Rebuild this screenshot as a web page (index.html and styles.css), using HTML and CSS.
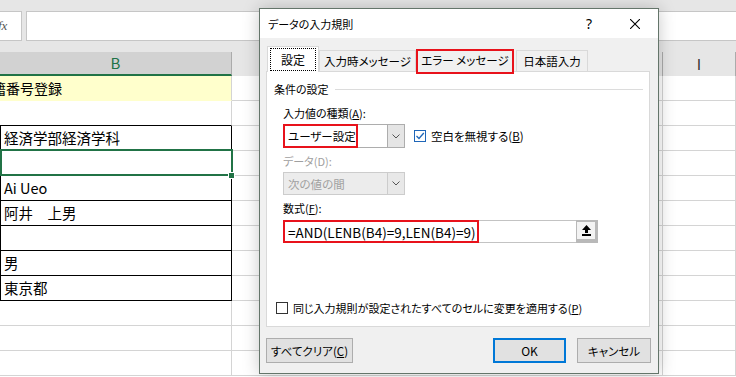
FILE: index.html
```html
<!DOCTYPE html>
<html lang="ja">
  <head>
    <meta charset="UTF-8" />
    <meta name="viewport" content="width=device-width, initial-scale=1.0" />
    <title>データの入力規則</title>
    <link rel="stylesheet" href="styles.css">
  </head>
  <body>
    <div class="topbar">
      <div class="fx">fx</div>
      <div class="formula"></div>
    </div>

    <div class="headers">
      <div class="hd sel">B</div>
      <div class="hd"></div>
      <div class="hd">I</div>
    </div>

    <div class="row"><div class="cell title">籍番号登録</div><div class="cell"></div><div class="cell"></div></div>
    <div class="row"><div class="cell top"></div><div class="cell"></div><div class="cell"></div></div>
    <div class="row"><div class="cell bx">経済学部経済学科</div><div class="cell"></div><div class="cell"></div></div>
    <div class="row"><div class="cell bx active"></div><div class="cell"></div><div class="cell"></div></div>
    <div class="row"><div class="cell bx">Ai Ueo</div><div class="cell"></div><div class="cell"></div></div>
    <div class="row"><div class="cell bx">阿井　上男</div><div class="cell"></div><div class="cell"></div></div>
    <div class="row"><div class="cell bx"></div><div class="cell"></div><div class="cell"></div></div>
    <div class="row"><div class="cell bx">男</div><div class="cell"></div><div class="cell"></div></div>
    <div class="row"><div class="cell bx">東京都</div><div class="cell"></div><div class="cell"></div></div>
    <div class="row"><div class="cell"></div><div class="cell"></div><div class="cell"></div></div>
    <div class="row"><div class="cell"></div><div class="cell"></div><div class="cell"></div></div>
    <div class="row"><div class="cell"></div><div class="cell"></div><div class="cell"></div></div>

    <div class="dialog">
      <div class="titlebar">
        <span class="dlg-title">データの入力規則</span>
        <span class="cap">?</span>
        <span class="cap">
          <svg width="10" height="10" viewBox="0 0 10 10"><path d="M0 0 10 10M10 0 0 10" stroke="#000" stroke-width="1.1" fill="none"/></svg>
        </span>
      </div>

      <div class="dlg-body">
        <div class="tabs">
          <div class="tab current"><span class="focus">設定</span></div>
          <div class="tab">入力時メッセージ</div>
          <div class="tab marked">エラー メッセージ</div>
          <div class="tab last">日本語入力</div>
        </div>

        <div class="panel">
          <div class="group"><span>条件の設定</span><i class="rule"></i></div>

          <div class="fields">
            <div class="lbl first">入力値の種類(<u>A</u>):</div>
            <div class="line">
              <div class="combo">
                <span class="val">ユーザー設定</span>
                <span class="hl short"></span>
                <span class="drop">
                  <svg width="8" height="5" viewBox="0 0 8 5"><path d="M0.5 0.5 4 4 7.5 0.5" stroke="#555" fill="none"/></svg>
                </span>
              </div>
              <div class="check">
                <span class="box on">
                  <svg width="10" height="10" viewBox="0 0 10 10"><path d="M1.5 5 4 7.5 8.8 2" stroke="#1f66b8" stroke-width="1.3" fill="none"/></svg>
                </span>
                空白を無視する(<u>B</u>)
              </div>
            </div>

            <div class="lbl off">データ(D):</div>
            <div class="combo disabled">
              <span class="val">次の値の間</span>
              <span class="drop">
                <svg width="8" height="5" viewBox="0 0 8 5"><path d="M0.5 0.5 4 4 7.5 0.5" stroke="#555" fill="none"/></svg>
              </span>
            </div>

            <div class="lbl">数式(<u>F</u>):</div>
            <div class="input">
              <span class="val formula-text">=AND(LENB(B4)=9,LEN(B4)=9)</span>
              <span class="hl long"></span>
              <span class="ref">
                <span>
                  <svg width="9" height="11" viewBox="0 0 9 11"><path d="M4.5 0 9 5H6v3H3V5H0z"/><rect x="0" y="9" width="9" height="2"/></svg>
                </span>
              </span>
            </div>
          </div>

          <div class="check apply">
            <span class="box"></span>
            同じ入力規則が設定されたすべてのセルに変更を適用する(<u>P</u>)
          </div>
        </div>

        <div class="buttons">
          <button class="btn clear">すべてクリア(<u>C</u>)</button>
          <button class="btn ok">OK</button>
          <button class="btn cancel">キャンセル</button>
        </div>
      </div>
    </div>
  </body>
</html>
```

FILE: styles.css
```css
body {
  margin: 0;
  width: 736px;
  height: 377px;
  overflow: hidden;
  position: relative;
  background-color: #fff;
  font-family: "Noto Sans CJK JP", sans-serif;
  color: #000;
}

/* formula bar */
.topbar {
  height: 52px;
  box-sizing: border-box;
  padding-top: 11px;
  display: flex;
  align-items: flex-start;
  gap: 4px;
  background-color: #e6e6e6;
}
.fx {
  width: 22px;
  height: 30px;
  box-sizing: border-box;
  background-color: #fff;
  border: 1px solid #c6c6c6;
  border-left: none;
  font: italic 13px "Liberation Serif", serif;
  color: #555;
  line-height: 28px;
  text-indent: -2px;
  overflow: hidden;
}
.formula {
  flex: 1;
  height: 30px;
  box-sizing: border-box;
  background-color: #fff;
  border: 1px solid #c6c6c6;
  border-right: none;
}

/* sheet */
.headers,
.row {
  display: grid;
  grid-template-columns: 232px 431px 1fr;
}
.headers {
  height: 24px;
  background-color: #e6e6e6;
}
.hd {
  box-sizing: border-box;
  border-right: 1px solid #ababab;
  text-align: center;
  font-size: 15px;
  line-height: 24px;
  color: #333;
}
.hd.sel {
  background-color: #d2d2d2;
  border-bottom: 2px solid #217346;
  color: #217346;
  line-height: 22px;
}
.row {
  height: 25px;
}
.cell {
  position: relative;
  box-sizing: border-box;
  border-right: 1px solid #d4d4d4;
  border-bottom: 1px solid #d4d4d4;
  padding-left: 4px;
  font-size: 14.5px;
  line-height: 24px;
  white-space: nowrap;
  overflow: hidden;
}
.cell.title {
  background-color: #ffffcc;
  border-bottom-color: #ffffcc;
  text-indent: -12px;
  font-size: 14px;
}
.cell.top {
  border-bottom-color: #000;
}
.cell.bx {
  padding-left: 3px;
  border-left: 1px solid #000;
  border-right-color: #000;
  border-bottom-color: #000;
}
.cell.active {
  overflow: visible;
  z-index: 1;
}
.cell.active::before {
  content: "";
  position: absolute;
  top: -2px;
  left: -1px;
  right: -2px;
  bottom: -1px;
  border: 2px solid #217346;
}
.cell.active::after {
  content: "";
  position: absolute;
  right: -4px;
  bottom: -4px;
  width: 5px;
  height: 5px;
  background-color: #217346;
  border: 1px solid #fff;
}

/* dialog */
.dialog {
  position: absolute;
  left: 259px;
  top: 8px;
  width: 400px;
  height: 366px;
  box-sizing: border-box;
  border: 1px solid #64756a;
  background-color: #f0f0f0;
  box-shadow: 0 0 16px rgba(0, 0, 0, 0.22);
  font-size: 11px;
  font-feature-settings: "palt";
}
.titlebar {
  height: 29px;
  display: flex;
  align-items: center;
  background-color: #fff;
}
.dlg-title {
  flex: 1;
  padding-left: 8px;
}
.cap {
  width: 46px;
  height: 100%;
  display: flex;
  align-items: center;
  justify-content: center;
  font: 14px "Noto Sans", sans-serif;
}
.dlg-body {
  padding: 8px 7px 0 6px;
}

.tabs {
  height: 25px;
  display: flex;
  align-items: flex-end;
  font-size: 11.5px;
}
.tab {
  position: relative;
  height: 21px;
  box-sizing: border-box;
  border: 1px solid #d9d9d9;
  border-bottom: none;
  background-color: #f0f0f0;
  display: flex;
  align-items: center;
  justify-content: center;
  width: 97px;
}
.tab.current {
  width: 52px;
  height: 26px;
  margin-left: 1px;
  margin-bottom: -1px;
  background-color: #fff;
  z-index: 1;
  font-size: 12px;
}
.tab.current .focus {
  border: 1px dotted #000;
  padding: 2px 10px;
  line-height: 17px;
}
.tab.marked {
  width: 98px;
  height: 25px;
  margin-bottom: -3px;
  border: 2px solid #e8121b;
  z-index: 2;
  padding-bottom: 3px;
}
.tab.last {
  width: 72px;
  margin-left: 2px;
}

.panel {
  height: 256px;
  margin-right: 1px;
  box-sizing: border-box;
  border: 1px solid #d9d9d9;
  background-color: #fff;
  display: flex;
  flex-direction: column;
}
.group {
  margin-top: 9px;
  padding-left: 7px;
  display: flex;
  align-items: center;
  line-height: 16px;
}
.rule {
  flex: 1;
  height: 1px;
  margin: 0 6px;
  background-color: #dcdcdc;
}
.fields {
  padding-left: 16px;
}
.lbl {
  margin-top: 5px;
  line-height: 16px;
}
.lbl.first {
  margin-top: 8px;
}
.lbl.off {
  color: #a0a0a0;
}
.line {
  margin-top: 3px;
  display: flex;
  align-items: center;
}
.combo {
  position: relative;
  width: 122px;
  height: 24px;
  box-sizing: border-box;
  border: 1px solid #adadad;
  background-color: #fff;
  display: flex;
  align-items: center;
  font-size: 11.5px;
}
.combo .val,
.input .val {
  padding-left: 4px;
}
.drop {
  margin-left: auto;
  width: 17px;
  height: 100%;
  box-sizing: border-box;
  border-left: 1px solid #adadad;
  background-color: #e5e5e5;
  display: flex;
  align-items: center;
  justify-content: center;
}
.combo.disabled {
  margin-top: 3px;
  height: 23px;
  border-color: #cccccc;
  background-color: #ececec;
  color: #a0a0a0;
}
.combo.disabled .drop {
  border-left-color: #cccccc;
  background-color: #e8e8e8;
}
.hl {
  position: absolute;
  left: -1px;
  top: -1px;
  bottom: -1px;
  border: 2px solid #e8121b;
}
.hl.short {
  width: 71px;
}
.hl.long {
  width: 192px;
}

.check {
  display: flex;
  align-items: center;
  line-height: 16px;
}
.line .check {
  margin-left: 9px;
  font-size: 11.5px;
}
.box {
  width: 12px;
  height: 12px;
  box-sizing: border-box;
  margin-right: 5px;
  border: 1px solid #333;
  background-color: #fff;
  display: flex;
  align-items: center;
  justify-content: center;
}
.box.on {
  border-color: #1f66b8;
}

.input {
  position: relative;
  margin-top: 4px;
  width: 315px;
  height: 23px;
  box-sizing: border-box;
  border: 1px solid #c3c3c3;
  background-color: #fff;
  display: flex;
  align-items: center;
}
.formula-text {
  font-size: 13.5px;
  font-feature-settings: normal;
}
.ref {
  margin: -1px -1px -1px auto;
  width: 22px;
  height: 23px;
  box-sizing: border-box;
  padding: 2px 3px 4px 1px;
  background-color: #b9b9b9;
}
.ref span {
  width: 100%;
  height: 100%;
  display: flex;
  align-items: center;
  justify-content: center;
  background-color: #f3f3f3;
}

.check.apply {
  margin-top: auto;
  margin-bottom: 10px;
  padding-left: 9px;
}

.buttons {
  margin-top: 11px;
  display: flex;
}
.btn {
  height: 25px;
  padding: 0;
  box-sizing: border-box;
  border: 1px solid #adadad;
  background-color: #e1e1e1;
  font-family: "Noto Sans CJK JP", sans-serif;
  font-size: 11.5px;
  font-feature-settings: "palt";
  color: #000;
}
.btn.clear {
  width: 87px;
}
.btn.ok {
  width: 73px;
  margin-left: auto;
  border: 2px solid #0078d7;
  font-size: 12px;
}
.btn.cancel {
  width: 74px;
  margin-left: 11px;
}
```
